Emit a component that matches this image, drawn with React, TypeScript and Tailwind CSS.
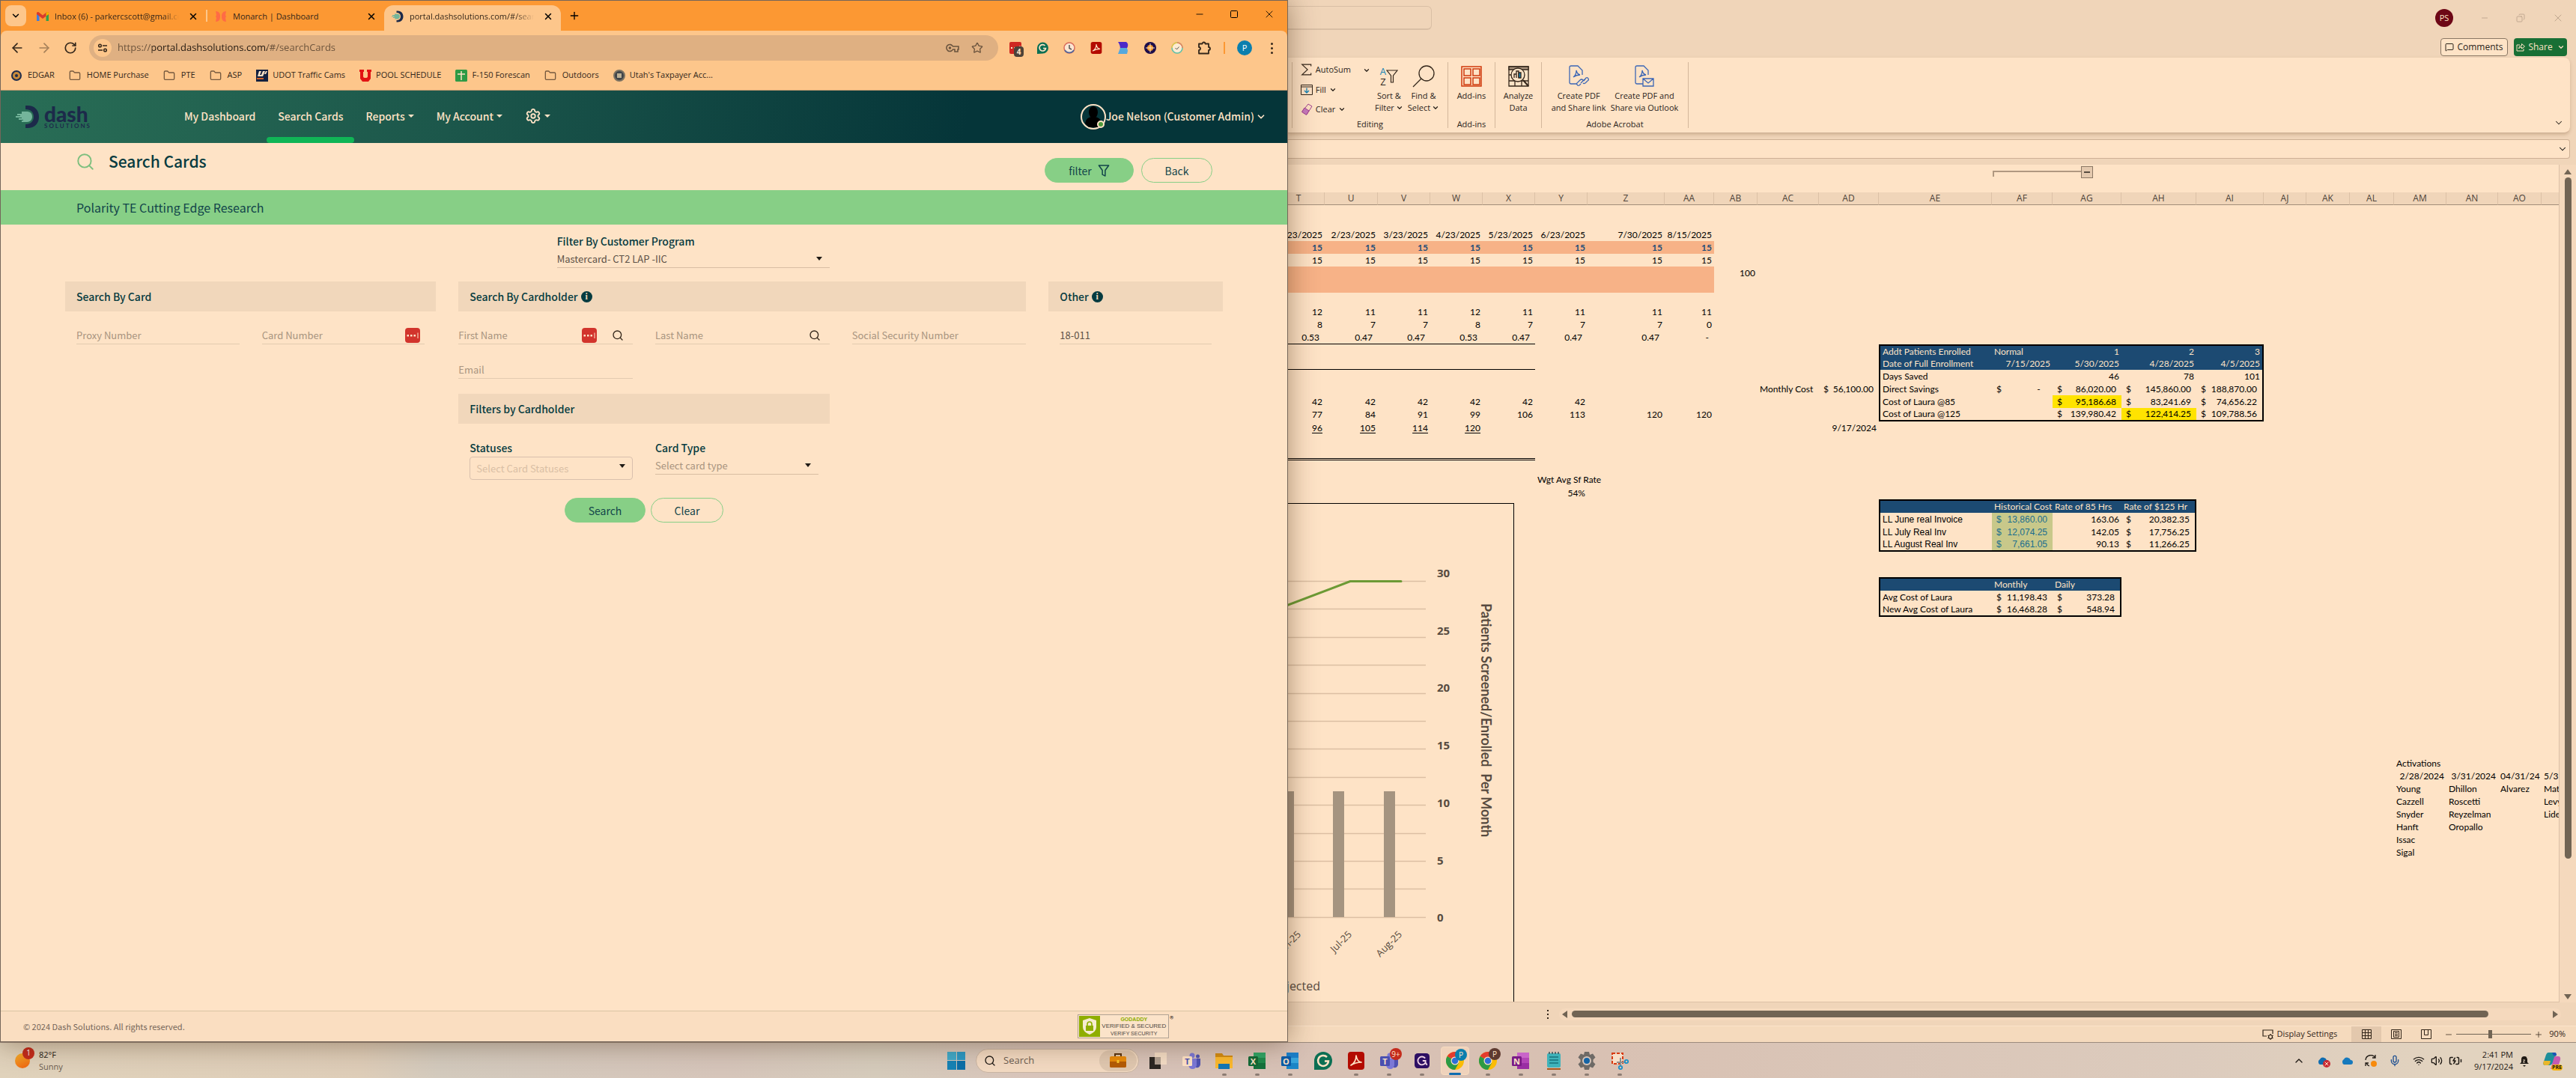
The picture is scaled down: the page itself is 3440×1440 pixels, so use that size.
import React from "react";
import {
  ArrowLeft, ArrowRight, RotateCw, Star, Folder, ChevronDown, ChevronUp, X, Plus, Minus, Square,
  Search, Mic, Wifi, Volume2, BatteryCharging, MessageSquare, Settings, Copy,
} from "lucide-react";

const ui = "font-['Open_Sans','Noto_Sans',sans-serif]";
const dash = "font-['Noto_Sans_CJK_SC','Noto_Sans',sans-serif]";

/* ------------------------------------------------------------------ */
/* Browser                                                             */
/* ------------------------------------------------------------------ */

function GmailIcon() {
  return (
    <svg viewBox="0 0 16 12" className="h-3 w-4 shrink-0">
      <path d="M0 1.5V12h3.5V5L0 1.5z" fill="#3f7de0" />
      <path d="M16 1.5V12h-3.5V5L16 1.5z" fill="#30a14e" />
      <path d="M0 1.5C0 0 2-.5 3 .5l5 4 5-4c1-1 3-.5 3 1V3L8 9 0 3z" fill="#d93a2b" />
      <path d="M12.500 1l1-.7c1-.6 2.500 0 2.500 1.500V3l-3.500 2.500z" fill="#f0b400" />
    </svg>
  );
}

function MonarchIcon() {
  return (
    <svg viewBox="0 0 16 16" className="size-4 shrink-0">
      <path d="M1 1c4 0 6 3 6 6v2c0 3-2 6-6 6l1-5-1-2 1-2zM15 1c-4 0-6 3-6 6v2c0 3 2 6 6 6l-1-5 1-2-1-2z" fill="#ff6b45" />
    </svg>
  );
}

function DashMark({ className }: { className: string }) {
  return (
    <svg viewBox="0 0 32 30" className={className}>
      <path d="M13 0h3c9 0 15 6 15 15s-6 15-15 15h-3v-5c7 0 11-4 11-10S20 5 13 5z" fill="#1c2a4a" />
      <path d="M8 8h8c5 1 6 4 6 7s-2 7-7 7H8v-2h2v-1H4v-2h4v-1H0v-2h6v-1H2v-2h6V9.500z" fill="#74b59b" />
    </svg>
  );
}

const tabText = "flex-1 overflow-hidden whitespace-nowrap text-[11px] text-[#33261a]";

function TabStrip() {
  return (
    <div className="flex h-10 shrink-0 items-end bg-[#fc9833] pl-1.5 pr-4">
      <button aria-label="Search tabs" className="mb-1.5 mr-2 grid h-7 w-7 shrink-0 place-items-center rounded-lg bg-[#fdc68b]">
        <ChevronDown className="size-3.5" strokeWidth={2.5} />
      </button>
      <div className="flex h-[34px] w-[232px] items-center gap-2 px-1.5 pb-1">
        <GmailIcon />
        <span className={tabText + " [mask-image:linear-gradient(90deg,#000_88%,transparent)]"}>Inbox (6) - parkercscott@gmail.com</span>
        <button aria-label="Close tab" className="ml-1 mr-1"><X className="size-3.5" strokeWidth={2.5} /></button>
      </div>
      <div className="mb-3 h-4 w-0.5 bg-[#fdc68b]" />
      <div className="flex h-[34px] w-[236px] items-center gap-2 px-2.5 pb-1">
        <MonarchIcon />
        <span className={tabText}>Monarch | Dashboard</span>
        <button aria-label="Close tab"><X className="size-3.5" strokeWidth={2.5} /></button>
      </div>
      <div className="flex h-[34px] w-[236px] items-center gap-2 rounded-t-xl bg-[#fdc68b] px-2.5 pb-1">
        <DashMark className="h-4 w-4 shrink-0" />
        <span className={tabText + " [mask-image:linear-gradient(90deg,#000_85%,transparent)]"}>portal.dashsolutions.com/#/searchCards</span>
        <button aria-label="Close tab" className="ml-1"><X className="size-3.5" strokeWidth={2.5} /></button>
      </div>
      <button aria-label="New tab" className="mb-3 ml-2.5"><Plus className="size-4" strokeWidth={2} /></button>
      <div className="mb-3.5 ml-auto flex gap-8">
        <button aria-label="Minimize"><Minus className="size-3.5" strokeWidth={1.5} /></button>
        <button aria-label="Maximize"><Square className="size-3.5 p-px" strokeWidth={2} /></button>
        <button aria-label="Close"><X className="size-4" strokeWidth={1.25} /></button>
      </div>
    </div>
  );
}

function ExtensionIcons() {
  return (
    <div className="flex items-center gap-4 pl-[13px] pr-[11px]">
      <div className="relative grid size-5 place-items-center">
        <svg viewBox="0 0 16 16" className="size-4"><rect width="16" height="16" rx="2" fill="#cf2721" /><path d="M2 7h2v2H2zM6 7h2v2H6zM10 7h2v2h-2zM13.500 5h1v6h-1z" fill="#fee3c6" /></svg>
        <div className="absolute left-2 top-2 grid h-[14px] w-[13px] place-items-center rounded bg-[#4d4238] text-[10px] font-bold text-[#fee3c6]">4</div>
      </div>
      <svg viewBox="0 0 16 16" className="mx-0.5 size-4"><path d="M1 16V8a7.500 7.500 0 1 1 7.500 7.500z" fill="#0b6f53" /><path d="M11.500 5A4.200 4.200 0 1 0 12.500 8.500H9" fill="none" stroke="#fee3c6" strokeWidth="1.700" /></svg>
      <svg viewBox="0 0 16 16" className="mx-0.5 size-4"><circle cx="8" cy="8" r="7" fill="#fbe6d2" stroke="#d86a5a" strokeWidth="1.500" /><path d="M2 11a7 7 0 0 0 12 0" fill="none" stroke="#53679a" strokeWidth="1.800" /><path d="M8 4v4.500l3 1.500" fill="none" stroke="#555" strokeWidth="1.500" /></svg>
      <AcrobatIcon className="mx-0.5 size-4" />
      <svg viewBox="0 0 16 16" className="mx-0.5 size-4"><path d="M1 0h11q3 2 2 6t-5 4H4q0-6-3-10z" fill="#4c29c8" /><path d="M4 8h8q2 1 2 4l-1 4H1z" fill="#55a8dd" /></svg>
      <svg viewBox="0 0 16 16" className="mx-0.5 size-4"><circle cx="8" cy="8" r="8" fill="#1d0d4a" /><circle cx="8" cy="8" r="4" fill="#f39a2b" /><path d="M8 2v12M2 8h12" stroke="#fee3c6" /></svg>
      <svg viewBox="0 0 16 16" className="mx-0.5 size-4"><circle cx="8" cy="8" r="7" fill="#fdebd2" stroke="#5cc0a8" strokeWidth="1.500" /><path d="M8 1a7 7 0 0 1 7 7" fill="none" stroke="#ef7f56" strokeWidth="1.500" /><path d="M1 8a7 7 0 0 1 7-7" fill="none" stroke="#f0c341" strokeWidth="1.500" /><path d="M5.500 8l2 2 3-3.500" fill="none" stroke="#555" /></svg>
      <svg viewBox="0 0 20 20" className="size-5"><path d="M3 4.500h4.500a2 2 0 0 1 4 0H16V9a2 2 0 0 1 0 4v4.500H3V13a2 2 0 0 0 0-4z" fill="none" stroke="#33261a" strokeWidth="1.800" strokeLinejoin="round" /></svg>
      <div className="h-4 w-0.5 bg-[#fc9833]" />
      <button aria-label="Profile" className="grid size-5 place-items-center rounded-full bg-[#0b7fae] text-[11px] text-white">P</button>
      <button aria-label="Menu" className="flex w-5 flex-col items-center gap-[3px]">
        <span className="size-[3px] rounded-full bg-[#33261a]" />
        <span className="size-[3px] rounded-full bg-[#33261a]" />
        <span className="size-[3px] rounded-full bg-[#33261a]" />
      </button>
    </div>
  );
}

function Toolbar() {
  return (
    <div className="flex h-[46px] shrink-0 items-center rounded-t-lg bg-[#fdc68b] pl-3">
      <button aria-label="Back" className="mr-4"><ArrowLeft className="size-5 text-[#33261a]" /></button>
      <button aria-label="Forward" className="mr-4"><ArrowRight className="size-5 text-[#a58059]" /></button>
      <button aria-label="Reload" className="mr-4"><RotateCw className="size-[18px] text-[#33261a]" strokeWidth={2.25} /></button>
      <div className="flex h-[34px] flex-1 items-center rounded-full bg-[#dfb082] px-1.5">
        <button aria-label="Site information" className="mr-2 grid size-6 place-items-center rounded-full bg-[#fdc68b]">
          <svg viewBox="0 0 14 14" className="size-3.5 text-[#33261a]" fill="none" stroke="currentColor" strokeWidth="1.500"><circle cx="3.500" cy="4" r="1.800" /><path d="M7 4h6M1 10h6" /><circle cx="10.500" cy="10" r="1.800" /></svg>
        </button>
        <input
          aria-label="Address"
          readOnly
          defaultValue="https://portal.dashsolutions.com/#/searchCards"
          className="flex-1 bg-[linear-gradient(90deg,#69513a_46px,#20170f_46px,#20170f_200px,#69513a_200px)] bg-clip-text text-[13px] text-transparent outline-none"
        />
        <svg viewBox="0 0 18 12" className="mr-4 h-3 w-[18px]" fill="none" stroke="#6b543e" strokeWidth="1.600"><path d="M9.500 4a4.500 4.500 0 1 0 0 4H12v3h4V8h1V4z" /><circle cx="5.500" cy="6" r="1" fill="#6b543e" /></svg>
        <Star className="mr-3.5 size-4 text-[#6b543e]" />
      </div>
      <ExtensionIcons />
    </div>
  );
}

function BookmarkFolder({ label }: { label: string }) {
  return (
    <a href="#" className="flex items-center gap-2"><Folder className="size-4 text-[#75593f]" strokeWidth={2} />{label}</a>
  );
}

function Bookmarks() {
  return (
    <nav className="flex h-[34px] shrink-0 items-center gap-[19px] border-b border-[#c19a70] bg-[#fdc68b] pb-1.5 pl-3.5 text-[11px] text-[#33261a]">
      <a href="#" className="flex items-center gap-2"><span className="grid size-3.5 place-items-center rounded-full border-2 border-[#1e2c4c] bg-[#c98b3a]"><span className="size-1 rounded-full bg-[#1e2c4c]" /></span>EDGAR</a>
      <BookmarkFolder label="HOME Purchase" />
      <BookmarkFolder label="PTE" />
      <BookmarkFolder label="ASP" />
      <a href="#" className="flex items-center gap-1.5"><svg viewBox="0 0 16 16" className="size-4"><path d="M0 0h16v16H0z" fill="#14213f" /><path d="M4 2L2 9h7l3-7h-3L7 7H5l2-5zM13 2l-2 4h2l2-4z" fill="#fee3c6" /><path d="M1 12h9" stroke="#d3622a" strokeWidth="2" /></svg>UDOT Traffic Cams</a>
      <a href="#" className="flex items-center gap-1.5"><svg viewBox="0 0 16 16" className="size-4"><path d="M0 0h6v3H5v6q0 2 3 2t3-2V3h-1V0h6v3h-1v9l-3 4H4l-3-4V3H0z" fill="#e21313" /></svg>POOL SCHEDULE</a>
      <a href="#" className="flex items-center gap-1.5"><svg viewBox="0 0 16 16" className="size-4"><rect width="16" height="16" rx="1.500" fill="#2d9a45" /><path d="M8 2v12M3 6h10" stroke="#fee3c6" strokeWidth="1.500" /></svg>F-150 Forescan</a>
      <BookmarkFolder label="Outdoors" />
      <a href="#" className="flex items-center gap-1.5"><span className="grid size-4 place-items-center rounded-full border-2 border-[#7d7362] bg-[#40454a]"><span className="size-1.5 bg-[#bdb094]" /></span>Utah's Taxpayer Acc...</a>
    </nav>
  );
}

/* ------------------------------------------------------------------ */
/* Card portal                                                         */
/* ------------------------------------------------------------------ */

function Caret() {
  return <span className="inline-block border-x-4 border-t-4 border-x-transparent border-t-current" />;
}

function PortalHeader() {
  return (
    <header className="flex h-[70px] shrink-0 items-stretch bg-[linear-gradient(100deg,#296e56_0%,#1c574b_35%,#053539_75%)] pl-5 pr-7 text-sm font-medium text-[#fee3c6]">
      <a href="#" className="mr-[109px] flex items-center gap-1.5 text-[#1c2a4a]">
        <DashMark className="h-[30px] w-8" />
        <span className="flex flex-col font-['Lato',sans-serif]">
          <span className="text-[28px] font-black leading-6">dash</span>
          <span className="text-[8px] font-bold leading-2 tracking-[2px]">SOLUTIONS</span>
        </span>
      </a>
      <nav className="flex">
        <a href="#" className="flex items-center px-[15px] pb-0.5">My Dashboard</a>
        <a href="#" className="relative flex items-center px-[15px] pb-0.5">Search Cards<span className="absolute inset-x-0 bottom-0 h-2 rounded bg-[#10b556]" /></a>
        <a href="#" className="flex items-center gap-1 px-[15px] pb-0.5">Reports <Caret /></a>
        <a href="#" className="flex items-center gap-1 px-[15px] pb-0.5">My Account <Caret /></a>
        <a href="#" aria-label="Settings" className="flex items-center gap-1 px-[15px] pb-0.5"><Settings className="size-[22px]" /> <Caret /></a>
      </nav>
      <button className="ml-auto flex items-center">
        <span className="relative size-[34px] rounded-full border-2 border-[#fee3c6] bg-[#06363a]">
          <svg viewBox="0 0 30 30" className="size-full"><ellipse cx="15" cy="9" rx="6" ry="8" fill="#000" /><path d="M4 24q1-9 11-9t11 9l-5 5H9z" fill="#000" /></svg>
          <span className="absolute bottom-0 right-0 size-2.5 rounded-full border-2 border-[#fee3c6] bg-[#4c9a3c]" />
        </span>
        <span className="pb-0.5">Joe Nelson (Customer Admin)</span>
        <ChevronDown className="ml-0.5 size-3.5" strokeWidth={3} />
      </button>
    </header>
  );
}

const pill = "flex h-[33px] items-center justify-center gap-2 rounded-full border border-[#87cf86] text-sm text-[#12454a]";

function InfoDot() {
  return <span className="grid size-[15px] place-items-center rounded-full bg-[#063b40] font-['Liberation_Serif',serif] text-xs font-bold leading-none text-[#f1d7bb]">i</span>;
}

function SectionBand({ title, info, className }: { title: string; info?: boolean; className: string }) {
  return (
    <h2 className={"flex h-10 items-center gap-1 bg-[#f1d7bb] px-[15px] text-sm font-medium text-[#063b40] " + className}>
      {title}{info && <InfoDot />}
    </h2>
  );
}

function PasswordBadge({ className }: { className: string }) {
  return (
    <svg viewBox="0 0 20 20" className={"size-5 shrink-0 " + className}>
      <rect width="20" height="20" rx="4" fill="#d2342c" />
      <path d="M2.500 9h2.500v2.500H2.500zM7 9h2.500v2.500H7zM11.500 9H14v2.500h-2.500zM16.500 6.500h1v7.500h-1z" fill="#fee3c6" />
    </svg>
  );
}

function Field({ label, value, children }: { label: string; value?: string; children?: React.ReactNode }) {
  return (
    <div className="flex h-6 items-center border-b border-[#e3cbb0]">
      <input aria-label={label} placeholder={label} defaultValue={value} className="w-0 min-w-0 flex-1 bg-transparent text-[13px] leading-5 text-[#5c5147] outline-none placeholder:text-[#a8947f]" />
      {children}
    </div>
  );
}

function PortalSelect({ label, value, boxed, tone }: { label: string; value: string; boxed?: boolean; tone: string }) {
  return (
    <label className="relative block text-sm font-medium leading-5 text-[#063b40]">
      {label}
      <select
        className={
          "mt-0.5 block w-full appearance-none text-[13px] font-normal leading-5 outline-none " + tone +
          (boxed ? " h-[31px] rounded border border-[#d9c0ad] px-2" : " h-6 border-b border-[#d8bea3]")
        }
      >
        <option>{value}</option>
      </select>
      <span className={"absolute right-2.5 border-x-4 border-t-[5px] border-x-transparent border-t-[#1f1a15] " + (boxed ? "bottom-4" : "bottom-2.5")} />
    </label>
  );
}

function Portal() {
  return (
    <div className={dash + " flex min-h-0 flex-1 flex-col bg-[#fee3c6]"}>
      <PortalHeader />
      <div className="flex h-[63px] shrink-0 items-start pl-[100px] pr-[100px]">
        <Search className="mr-[18px] mt-3 size-[26px] text-[#7dbf7e]" strokeWidth={1.75} />
        <h1 className="mt-1.5 text-[21px] font-medium leading-9 text-[#063b40]">Search Cards</h1>
        <button className={pill + " ml-auto mr-2.5 mt-5 w-[119px] bg-[#87cf86]"}>
          filter
          <svg viewBox="0 0 16 17" className="h-4 w-4" fill="none" stroke="currentColor" strokeWidth="1.600" strokeLinejoin="round"><path d="M1 1h14l-5 7v8l-4-2V8z" /></svg>
        </button>
        <button className={pill + " mt-5 w-[95px]"}>Back</button>
      </div>
      <div className="flex h-[46px] shrink-0 items-center bg-[#87cf86] pl-[101px] text-base text-[#12454a]">Polarity TE Cutting Edge Research</div>

      <form className="mx-[86px] mt-3" onSubmit={(e) => e.preventDefault()}>
        <div className="grid grid-cols-12 gap-x-[30px]">
          <div className="col-span-3 col-start-6">
            <PortalSelect label="Filter By Customer Program" value="Mastercard- CT2 LAP -IIC" tone="text-[#5c5147]" />
          </div>
        </div>
        <div className="mt-[18px] grid grid-cols-12 gap-x-[30px]">
          <section className="col-span-4">
            <SectionBand title="Search By Card" className="" />
            <div className="mt-5 grid grid-cols-2 gap-[30px] px-[15px]">
              <Field label="Proxy Number" />
              <Field label="Card Number"><PasswordBadge className="mr-1.5" /></Field>
            </div>
          </section>
          <section className="col-span-6 grid grid-cols-3 content-start gap-x-[30px]">
            <SectionBand title="Search By Cardholder" info className="col-span-3 mb-5" />
            <Field label="First Name"><PasswordBadge className="mr-5" /><button aria-label="Look up first name" className="mr-3 grid w-4 place-items-center"><Search className="size-4 text-[#33261a]" strokeWidth={2} /></button></Field>
            <Field label="Last Name"><button aria-label="Look up last name" className="mr-3 grid w-4 place-items-center"><Search className="size-4 text-[#33261a]" strokeWidth={2} /></button></Field>
            <Field label="Social Security Number" />
            <div className="mb-5 mt-[22px]"><Field label="Email" /></div>
            <SectionBand title="Filters by Cardholder" className="col-span-2 col-start-1 mb-[22px]" />
            <div className="col-start-1 pl-[15px]"><PortalSelect label="Statuses" value="Select Card Statuses" boxed tone="text-[#d9bfa5]" /></div>
            <div className="pr-[15px]"><PortalSelect label="Card Type" value="Select card type" tone="text-[#a8947f]" /></div>
          </section>
          <section className="col-span-2">
            <SectionBand title="Other" info className="" />
            <div className="mt-5 px-[15px]"><Field label="Other" value="18-011" /></div>
          </section>
        </div>
        <div className="mt-6 flex justify-center gap-[7px]">
          <button className={pill + " w-[108px] bg-[#87cf86]"}>Search</button>
          <button className={pill + " w-[97px]"}>Clear</button>
        </div>
      </form>

      <footer className="mt-auto flex h-[41px] shrink-0 items-center border-t border-[#dac4a3] bg-[#fadec1] pl-[30px] pr-[152px] text-[11px] text-[#75665a]">
        © 2024 Dash Solutions. All rights reserved.
        <a href="#" className="ml-auto flex h-8 w-[122px] border border-[#b0a294] bg-[#fbe3c9] p-px leading-none">
          <span className="grid h-full w-[28px] shrink-0 place-items-center bg-[#8fae00]">
            <svg viewBox="0 0 18 22" className="h-[22px] w-[18px]"><path d="M9 0l9 3v9q0 6-9 10Q0 18 0 12V3z" fill="#f6ecd0" /><path d="M6 10V8a3 3 0 0 1 6 0v2" fill="none" stroke="#8fae00" strokeWidth="1.600" /><path d="M4 10h10v7H4z" fill="#8fae00" /></svg>
          </span>
          <span className="flex flex-1 flex-col items-center justify-between py-px font-['Liberation_Sans',sans-serif]">
            <span className="text-[7px] font-bold text-[#8fae00]">GODADDY</span>
            <span className="text-[8px] text-[#4d463f]">VERIFIED &amp; SECURED</span>
            <span className="text-[7px] text-[#4d463f]">VERIFY SECURITY</span>
          </span>
        </a>
        <span className="mb-5 ml-px text-[10px] leading-none text-[#33261a]">®</span>
      </footer>
    </div>
  );
}

/* ------------------------------------------------------------------ */
/* Spreadsheet                                                         */
/* ------------------------------------------------------------------ */

function Chev() {
  return <ChevronDown className="inline size-2.5" strokeWidth={3} />;
}

function AdobeDoc({ mail }: { mail?: boolean }) {
  return (
    <svg viewBox="0 0 28 30" className="h-[30px] w-7" fill="none" stroke="#3b66b5" strokeWidth="1.300">
      <path d="M12 25H4q-2 0-2-2V3q0-2 2-2h9l6 6v6M7 16q4-3 4-9 1 5 5 6-5 0-9 3" />
      {mail ? <path d="M12 18h14v10H12zl7 6 7-6" /> : <path d="M17 25l-2 2q-2 1-3-1t1-3l3-3q2-2 4 0M21 21l3-4q2-1 3 1t-1 3l-3 3q-2 1-3 0M17 24l5-5" />}
    </svg>
  );
}

function RibbonGroup({ label, className, children }: { label: string; className: string; children: React.ReactNode }) {
  return (
    <div className={"my-1.5 flex shrink-0 flex-col justify-between border-r border-[#d3b79b] " + className}>
      <div className="flex items-start justify-center gap-1.5">{children}</div>
      <div className="h-2.5 text-center leading-[10px]">{label}</div>
    </div>
  );
}

function BigButton({ icon, lines, menu }: { icon: React.ReactNode; lines: string[]; menu?: boolean }) {
  return (
    <button className="flex flex-col items-center leading-4">
      <span className="grid h-[37px] place-items-center">{icon}</span>
      {lines.map((l, i) => <span key={l} className="flex items-center gap-0.5 whitespace-nowrap">{l}{menu && i === lines.length - 1 && <Chev />}</span>)}
    </button>
  );
}

function Ribbon() {
  return (
    <div className="mr-2 flex h-[101px] shrink-0 rounded-r-lg border-b border-[#cdb095] bg-[#fee3c6] text-[11px] text-[#2b231b] shadow-[0_2px_4px_rgba(120,80,40,0.25)]">
      <div className="my-1.5 w-1.5 border-r border-[#d3b79b]" />
      <RibbonGroup label="Editing" className="w-[208px]">
        <div className="flex flex-col gap-2.5 pt-0.5">
          <button className="flex items-center gap-1"><svg viewBox="0 0 14 14" className="size-4" fill="none" stroke="#33261a"><path d="M12 3V1H1.500L8 7l-6.500 6H12v-2" /></svg>AutoSum<span className="ml-3"><Chev /></span></button>
          <button className="flex items-center gap-1"><svg viewBox="0 0 16 14" className="size-4" fill="none" stroke="#33261a"><path d="M.5.5h15v13H.5zM.5 3h15" /><path d="M8 4.500V11M5 8l3 3 3-3" stroke="#1683b5" strokeWidth="1.300" /></svg>Fill<Chev /></button>
          <button className="flex items-center gap-1"><svg viewBox="0 0 16 16" className="size-4" stroke="#a24091"><path d="M10 1l5 3-7 11-6-4z" fill="none" /><path d="M5 6l6 4-3.500 5.500-6-4z" fill="#c77abd" /></svg>Clear<Chev /></button>
        </div>
        <BigButton menu lines={["Sort &", "Filter"]} icon={
          <span className="flex items-center"><span className="flex flex-col text-[13px] leading-[14px]"><span className="text-[#1683b5]">A</span><span>Z</span></span><svg viewBox="0 0 16 18" className="h-[18px] w-4" fill="none" stroke="#33261a" strokeWidth="1.200"><path d="M1 1h14L9.500 8v9h-3V8z" /></svg></span>
        } />
        <BigButton menu lines={["Find &", "Select"]} icon={<svg viewBox="0 0 30 30" className="size-[30px]" fill="none" stroke="#33261a" strokeWidth="1.300"><circle cx="19" cy="11" r="10" /><path d="M12 18L1 29" /></svg>} />
      </RibbonGroup>
      <RibbonGroup label="Add-ins" className="w-[63px]">
        <BigButton lines={["Add-ins"]} icon={<svg viewBox="0 0 28 28" className="size-7" fill="none" stroke="#cf3a0c" strokeWidth="1.500"><path d="M1 1h26v26H1zM4 4h9v9H4zM16 4h9v9h-9zM4 16h9v9H4zM16 16h9v9h-9z" /></svg>} />
      </RibbonGroup>
      <RibbonGroup label="" className="w-[62px]">
        <BigButton lines={["Analyze", "Data"]} icon={<svg viewBox="0 0 28 28" className="size-7" fill="none" stroke="#33261a" strokeWidth="1.300"><path d="M1 1h26v26H1z" /><path d="M1 1h26v4H1z" fill="#a9937d" /><path d="M1 12h4M1 20h26M9 20v7M18 20v7" /><circle cx="13" cy="12" r="9" fill="#fee3c6" /><path d="M20 19l7 8" strokeWidth="2" /><path d="M8 16v-5h3v5M11 16V7h3v9" /><path d="M14 9h3v7h-3z" fill="#1683b5" /></svg>} />
      </RibbonGroup>
      <RibbonGroup label="Adobe Acrobat" className="w-[196px]">
        <BigButton lines={["Create PDF", "and Share link"]} icon={<AdobeDoc />} />
        <BigButton lines={["Create PDF and", "Share via Outlook"]} icon={<AdobeDoc mail />} />
      </RibbonGroup>
      <button aria-label="Collapse ribbon" className="mb-1.5 ml-auto mr-2 self-end"><ChevronDown className="size-3.5" strokeWidth={1.75} /></button>
    </div>
  );
}

const columns: [string, number][] = [
  ["T", 49], ["U", 71], ["V", 70], ["W", 70], ["X", 70], ["Y", 70], ["Z", 103], ["AA", 66], ["AB", 58], ["AC", 82], ["AD", 80],
  ["AE", 151], ["AF", 81], ["AG", 92], ["AH", 100], ["AI", 90], ["AJ", 57], ["AK", 58], ["AL", 59], ["AM", 70], ["AN", 69], ["AO", 58], ["", 24],
];

type Cell = { v?: string; k?: "l" | "r" | "m" | "n" | "c"; c?: string };
type Row = { h: number; cells?: Record<string, Cell> };

const names = columns.map((c) => c[0]);
const series = (cols: string, values: string[], k: Cell["k"] = "r", c = ""): Record<string, Cell> => {
  const out: Record<string, Cell> = {};
  cols.split(" ").forEach((n, i) => { out[n] = { v: values[i], k, c }; });
  return out;
};
const TAA = "T U V W X Y Z AA";
const TX = "T U V W X";
const navy = "bg-[#1c4a72] text-[#fee3c6]";
const salmon = "bg-[#f7b287]";
const L = "border-l-2 border-l-black";
const R = "border-r-2 border-r-black";
const B = "border-b-2 border-b-black";
const Tp = "border-t-2 border-t-black";
const olive = "bg-[#c8c88a] text-[#1a6d8e]";
const yellow = "bg-[#ffe300]";
const blank = (n: number) => Array<string>(n).fill("");

const rows: Row[] = [
  { h: 14 },
  { h: 17 },
  { h: 17, cells: series(TAA, ["1/23/2025", "2/23/2025", "3/23/2025", "4/23/2025", "5/23/2025", "6/23/2025", "7/30/2025", "8/15/2025"]) },
  { h: 17, cells: series(TAA, Array(8).fill("15"), "r", "font-bold text-[#1f4e79] " + salmon) },
  { h: 17, cells: series(TAA, Array(8).fill("15")) },
  { h: 18, cells: { ...series(TAA, blank(8), "r", salmon), AB: { v: "100", k: "r" } } },
  { h: 17, cells: series(TAA, blank(8), "r", salmon) },
  { h: 17 },
  { h: 17, cells: series(TAA, ["12", "11", "11", "12", "11", "11", "11", "11"]) },
  { h: 17, cells: series(TAA, ["8", "7", "7", "8", "7", "7", "7", "0"]) },
  { h: 18, cells: { ...series(TX, ["0.53", "0.47", "0.47", "0.53", "0.47"], "n", "border-b border-b-black"), ...series("Y Z AA", ["0.47", "0.47", "-"], "n") } },
  { h: 17, cells: { AE: { v: "Addt Patients Enrolled", c: `${navy} ${L} ${Tp}` }, AF: { v: "Normal", c: `${navy} ${Tp}` }, ...series("AG AH", ["1", "2"], "r", `${navy} ${Tp}`), AI: { v: "3", k: "r", c: `${navy} ${Tp} ${R}` } } },
  { h: 17, cells: { ...series(TX, blank(5), "r", "border-b border-b-black"), AE: { v: "Date of Full Enrollment", c: `${navy} ${L}` }, ...series("AF AG AH", ["7/15/2025", "5/30/2025", "4/28/2025"], "r", navy), AI: { v: "4/5/2025", k: "r", c: `${navy} ${R}` } } },
  { h: 17, cells: { AE: { v: "Days Saved", c: L }, AG: { v: "46", k: "r" }, AH: { v: "78", k: "r" }, AI: { v: "101", k: "r", c: R } } },
  { h: 17, cells: { AC: { v: "Monthly Cost" }, AD: { v: "56,100.00", k: "m" }, AE: { v: "Direct Savings", c: L }, AF: { v: "-   ", k: "m" }, AG: { v: "86,020.00", k: "m" }, AH: { v: "145,860.00", k: "m" }, AI: { v: "188,870.00", k: "m", c: R } } },
  { h: 17, cells: { ...series("T U V W X Y", Array(6).fill("42")), AE: { v: "Cost of Laura @85", c: L }, AG: { v: "95,186.68", k: "m", c: yellow }, AH: { v: "83,241.69", k: "m" }, AI: { v: "74,656.22", k: "m", c: R } } },
  { h: 18, cells: { ...series(TAA, ["77", "84", "91", "99", "106", "113", "120", "120"]), AE: { v: "Cost of Laura @125", c: `${L} ${B}` }, AF: { c: B }, AG: { v: "139,980.42", k: "m", c: B }, AH: { v: "122,414.25", k: "m", c: `${yellow} ${B}` }, AI: { v: "109,788.56", k: "m", c: `${R} ${B}` } } },
  { h: 17, cells: { ...series("T U V W", ["96", "105", "114", "120"], "r", "underline underline-offset-2"), AD: { v: "9/17/2024", k: "r" } } },
  { h: 17 },
  { h: 18, cells: series(TX, blank(5), "r", "border-b-3 border-double border-b-black") },
  { h: 17 },
  { h: 18, cells: { Y: { v: "Wgt Avg Sf Rate" } } },
  { h: 17, cells: { Y: { v: "54%", k: "r" } } },
  { h: 18, cells: { AE: { c: `${navy} ${L} ${Tp}` }, AF: { v: "Historical Cost", c: `${navy} ${Tp}` }, AG: { v: "Rate of 85 Hrs", c: `${navy} ${Tp}` }, AH: { v: "Rate of $125 Hr", c: `${navy} ${Tp} ${R}` } } },
  { h: 17, cells: { AE: { v: "LL June real Invoice", c: `font-['Liberation_Sans'] ${L}` }, AF: { v: "13,860.00", k: "m", c: `font-['Liberation_Sans'] ${olive}` }, AG: { v: "163.06", k: "r" }, AH: { v: "20,382.35", k: "m", c: R } } },
  { h: 17, cells: { AE: { v: "LL July Real Inv", c: `font-['Liberation_Sans'] ${L}` }, AF: { v: "12,074.25", k: "m", c: `font-['Liberation_Sans'] ${olive}` }, AG: { v: "142.05", k: "r" }, AH: { v: "17,756.25", k: "m", c: R } } },
  { h: 18, cells: { AE: { v: "LL August Real Inv", c: `font-['Liberation_Sans'] ${L} ${B}` }, AF: { v: "7,661.05", k: "m", c: `font-['Liberation_Sans'] ${olive} ${B}` }, AG: { v: "90.13", k: "r", c: B }, AH: { v: "11,266.25", k: "m", c: `${R} ${B}` } } },
  { h: 17 },
  { h: 17 },
  { h: 18, cells: { AE: { c: `${navy} ${L} ${Tp}` }, AF: { v: "Monthly", c: `${navy} ${Tp}` }, AG: { v: "Daily", c: `${navy} ${Tp} ${R}` } } },
  { h: 17, cells: { AE: { v: "Avg Cost of Laura", c: L }, AF: { v: "11,198.43", k: "m" }, AG: { v: "373.28", k: "m", c: R } } },
  { h: 18, cells: { AE: { v: "New Avg Cost of Laura", c: `${L} ${B}` }, AF: { v: "16,468.28", k: "m", c: B }, AG: { v: "548.94", k: "m", c: `${R} ${B}` } } },
  ...Array.from({ length: 11 }, () => ({ h: 17 })),
  { h: 17, cells: { AM: { v: "Activations" } } },
  { h: 17, cells: { AM: { v: "2/28/2024", k: "r" }, AN: { v: "3/31/2024", k: "r" }, AO: { v: "04/31/24" }, "": { v: "5/31/24" } } },
  { h: 17, cells: { AM: { v: "Young" }, AN: { v: "Dhillon" }, AO: { v: "Alvarez" }, "": { v: "Matthews" } } },
  { h: 17, cells: { AM: { v: "Cazzell" }, AN: { v: "Roscetti" }, "": { v: "Levy" } } },
  { h: 17, cells: { AM: { v: "Snyder" }, AN: { v: "Reyzelman" }, "": { v: "Liden" } } },
  { h: 17, cells: { AM: { v: "Hanft" }, AN: { v: "Oropallo" } } },
  { h: 17, cells: { AM: { v: "Issac" } } },
  { h: 17, cells: { AM: { v: "Sigal" } } },
];

const align = {
  l: "justify-start pl-[3px]",
  r: "justify-end pr-[3px]",
  n: "justify-end pr-[7px]",
  m: "justify-between pl-1.5 pr-[7px]",
  c: "justify-center",
};

function CellView({ cell }: { cell?: Cell }) {
  if (!cell) return <td />;
  const clip = cell.v === "Historical Cost";
  return (
    <td className={"p-0 " + (cell.c ?? "")}>
      <div className={"flex items-center whitespace-nowrap leading-none " + align[cell.k ?? "l"] + (clip ? " h-[15px] overflow-hidden" : " h-0")}>
        {cell.k === "m" && <span>$</span>}
        <span className="whitespace-pre">{cell.v}</span>
      </div>
    </td>
  );
}

const gridLines = Array.from({ length: 13 }, (_, i) => 103 + Math.round(i * 37.4));
const axis = [30, 25, 20, 15, 10, 5, 0];

function EnrollmentChart() {
  return (
    <div className="absolute left-0 top-[415px] h-[680px] w-[302px] overflow-hidden border-r border-t border-black bg-[#fee3c6]">
      <svg viewBox="0 0 302 680" className="h-[680px] w-[302px] font-['Open_Sans',sans-serif]" fill="#574b40">
        {gridLines.map((y) => <path key={y} d={`M0 ${y + 0.5}H184`} stroke="#dcbfa3" strokeWidth="1.500" />)}
        <path d="M0 384h8v168H0zM60 384h15v168H60zM128 384h15v168h-15z" fill="#a59480" />
        <path d="M-10 139L83 103.500H151" fill="none" stroke="#6c9a35" strokeWidth="3" strokeLinecap="round" />
        {axis.map((n, i) => <text key={n} x="199" y={98 + Math.round(i * 76.7)} fontSize="15" fontWeight="700">{n}</text>)}
        <text transform="translate(258 133) rotate(90)" fontSize="18" fontWeight="700" className="font-['Lato',sans-serif]" xmlSpace="preserve">{"Patients Screened/Enrolled  Per Month"}</text>
        <text transform="translate(18 576) rotate(-45)" fontSize="13" textAnchor="end">Jun-25</text>
        <text transform="translate(86 576) rotate(-45)" fontSize="13" textAnchor="end">Jul-25</text>
        <text transform="translate(153 576) rotate(-45)" fontSize="13" textAnchor="end">Aug-25</text>
        <text x="43" y="650" fontSize="16" textAnchor="end">Projected</text>
      </svg>
    </div>
  );
}

function Sheet() {
  return (
    <div className="mt-2 flex min-h-0 flex-1">
      <div className="flex min-w-0 flex-1 flex-col overflow-hidden border-b border-r border-[#dcc1a6] bg-[#fee3c6]">
        <div className="flex h-[37px] shrink-0 items-start pl-[941px]">
          <span className="mt-2 h-2 w-[118px] border-l-2 border-t-2 border-[#b09880]" />
          <button aria-label="Collapse outline" className="mt-0.5 grid h-4 w-4 place-items-center border border-[#8a7764] bg-[#e4c9ae]"><span className="h-0.5 w-2 bg-[#574b40]" /></button>
        </div>
        <div className="relative min-h-0 flex-1 overflow-hidden">
          <table className="w-full table-fixed border-separate border-spacing-0 font-['Lato',sans-serif] text-xs text-black">
            <colgroup>
              {columns.map(([n, w]) => <col key={n} style={{ width: w }} />)}
            </colgroup>
            <thead>
              <tr className="h-[17px]">
                {columns.map(([n]) => (
                  <th key={n} scope="col" className={ui + " border-b border-r border-b-[#a28e79] border-r-[#dcc1a6] bg-[#f0d5b9] p-0 font-normal leading-none text-[#4d4238]"}>
                    <div className={"flex h-0 items-center justify-center " + (n === "T" ? "pr-5" : "")}>{n}</div>
                  </th>
                ))}
              </tr>
            </thead>
            <tbody>
              {rows.map((r, i) => (
                <tr key={i} style={{ height: r.h }}>
                  {names.map((n) => <CellView key={n} cell={r.cells?.[n]} />)}
                </tr>
              ))}
            </tbody>
          </table>
          <EnrollmentChart />
        </div>
      </div>
      <div className="flex w-[22px] shrink-0 flex-col items-center bg-[#f5d9bd] pb-1 pt-1.5">
        <span className="border-x-[5px] border-b-[7px] border-x-transparent border-b-[#716454]" />
        <span className="mt-1 w-[9px] basis-[910px] rounded-full bg-[#716454]" />
        <span className="mt-auto border-x-[5px] border-t-[7px] border-x-transparent border-t-[#716454]" />
      </div>
    </div>
  );
}

function StatusBar() {
  return (
    <div className="flex h-[22px] shrink-0 items-center justify-end border-t border-[#fbe3ca] bg-[#f5dabd] pr-3.5 text-[11px] text-[#33261a]">
      <button className="mr-[19px] flex items-center gap-1"><svg viewBox="0 0 16 14" className="h-3.5 w-4" fill="none" stroke="currentColor" strokeWidth="1.200"><path d="M6 9H1V1h13v5" /><circle cx="11" cy="10" r="2.500" /><path d="M11 6v1.500M11 12.500V14M7.500 8l1.500 1M13 11l1.500 1M7.500 12L9 11M13 9l1.500-1" /></svg>Display Settings</button>
      <button aria-label="Normal view" className="grid h-[21px] w-10 place-items-center bg-[#e3c8ad]"><svg viewBox="0 0 13 13" className="size-[13px]" fill="none" stroke="currentColor"><path d="M.5.5h12v12H.5zM4.500.5v12M8.500.5v12M.5 4.500h12M.5 8.500h12" /></svg></button>
      <button aria-label="Page layout view" className="grid w-10 place-items-center"><svg viewBox="0 0 14 13" className="h-[13px] w-3.5" fill="none" stroke="currentColor"><path d="M.5.5h13v12H.5zM3.500 2.500h7v8h-7zM5 4.500h4M5 6.500h4M5 8.500h4" /></svg></button>
      <button aria-label="Page break view" className="grid w-10 place-items-center"><svg viewBox="0 0 14 13" className="h-[13px] w-3.5" fill="none" stroke="currentColor"><path d="M.5.5h13v12H.5zM4.500.5v7h5v-7" /></svg></button>
      <button aria-label="Zoom out" className="ml-1"><Minus className="size-3" strokeWidth={1.5} /></button>
      <label className="relative mx-1 flex h-4 w-[100px] items-center">
        <input type="range" aria-label="Zoom" defaultValue={45} className="h-px w-full appearance-none bg-[#716454] [&::-webkit-slider-thumb]:h-[11px] [&::-webkit-slider-thumb]:w-[5px] [&::-webkit-slider-thumb]:appearance-none [&::-webkit-slider-thumb]:bg-[#716454]" />
      </label>
      <button aria-label="Zoom in"><Plus className="size-3" strokeWidth={1.5} /></button>
      <span className="ml-2">90%</span>
    </div>
  );
}

function Excel() {
  return (
    <div className={ui + " flex min-w-0 flex-1 flex-col bg-[#f0d5b9]"}>
      <div className="flex h-[77px] shrink-0 justify-between">
        <input aria-label="Search workbook" className="mt-2 h-8 w-48 rounded-r-md border border-b-2 border-l-0 border-[#d9bfa5] outline-none" />
        <div className="flex flex-col items-end pr-3 pt-3">
          <div className="flex items-center gap-9 pr-1 text-[#b39c85]">
            <span className="grid size-6 place-items-center rounded-full bg-[#6d0716] text-[11px] text-[#fee3c6]">PS</span>
            <Minus className="size-3" strokeWidth={1.5} />
            <Copy className="size-3 -scale-x-100" strokeWidth={1.5} />
            <X className="size-4" strokeWidth={1.25} />
          </div>
          <div className="mt-[15px] flex gap-2">
            <button className="flex h-6 w-[90px] items-center justify-center gap-1 rounded border border-[#8a7764] bg-[#fee3c6] text-xs text-[#2b231b]"><MessageSquare className="size-3" />Comments</button>
            <button className="flex h-6 w-[71px] items-center justify-center gap-1 rounded bg-[#186f35] text-xs text-[#fee3c6]">
              <svg viewBox="0 0 12 12" className="size-3" fill="none" stroke="currentColor"><path d="M5 3H1v8h9V8M3.500 8q0-4 4-4V1.500L11.500 5 7.500 8V6q-3 0-4 2z" /></svg>
              Share <ChevronDown className="ml-0.5 size-2.5" strokeWidth={3} />
            </button>
          </div>
        </div>
      </div>
      <Ribbon />
      <div className="mr-2 mt-2 flex h-[26px] shrink-0 items-center rounded-r border border-l-0 border-[#cdb095] bg-[#fee3c6]">
        <input aria-label="Formula" className="flex-1 outline-none" />
        <ChevronDown className="mr-0.5 size-3.5" strokeWidth={1.75} />
      </div>
      <Sheet />
      <div className="flex h-[31px] shrink-0 items-center pl-[346px] pr-5">
        <span className="mr-3.5 flex flex-col gap-[3px]"><i className="size-0.5 bg-[#33261a]" /><i className="size-0.5 bg-[#33261a]" /><i className="size-0.5 bg-[#33261a]" /></span>
        <div className="flex h-4 flex-1 items-center rounded-full bg-[#f5d9bd] px-1">
          <span className="border-y-[5px] border-r-[7px] border-y-transparent border-r-[#716454]" />
          <span className="ml-1.5 h-[9px] basis-[1224px] rounded-full bg-[#716454]" />
          <span className="ml-auto border-y-[5px] border-l-[7px] border-y-transparent border-l-[#716454]" />
        </div>
      </div>
      <StatusBar />
    </div>
  );
}

/* ------------------------------------------------------------------ */
/* Taskbar                                                             */
/* ------------------------------------------------------------------ */

function AcrobatIcon({ className }: { className: string }) {
  return (
    <svg viewBox="0 0 24 24" className={className}><rect x="1" width="22" height="24" rx="4" fill="#b30b00" /><path d="M5 18q7-4 7-13 1 8 7 9-8 0-14 4z" fill="none" stroke="#fee3c6" strokeWidth="1.700" strokeLinejoin="round" /></svg>
  );
}

function ChromeIcon() {
  return (
    <svg viewBox="0 0 24 24" className="size-6">
      <circle cx="12" cy="12" r="12" fill="#fbbc05" />
      <path d="M12 12L1.600 6A12 12 0 0 1 22.400 6z" fill="#e33b2e" />
      <path d="M12 12L1.600 6A12 12 0 0 0 12 24l5-9z" fill="#2d9a45" />
      <circle cx="12" cy="12" r="5.500" fill="#fee3c6" />
      <circle cx="12" cy="12" r="4.300" fill="#2f6fd8" />
    </svg>
  );
}

function LetterTile({ letter, dark, bands }: { letter: string; dark: string; bands: string[] }) {
  return (
    <svg viewBox="0 0 24 24" className="size-6">
      <path d="M7 1h16v8H7z" fill={bands[0]} /><path d="M7 8h16v8H7z" fill={bands[1]} /><path d="M7 15h16v8H7z" fill={bands[2]} />
      <rect y="6" width="13" height="13" rx="1.500" fill={dark} />
      <text x="6.500" y="16.500" textAnchor="middle" fontSize="11" fontWeight="700" fill="#fee3c6">{letter}</text>
    </svg>
  );
}

function TeamsIcon({ light }: { light?: boolean }) {
  return (
    <svg viewBox="0 0 24 24" className="size-6">
      <circle cx="13" cy="5" r="3.500" fill="#7b78d6" /><circle cx="20.500" cy="6" r="2.500" fill="#4f52b2" />
      <path d="M16 9h8v8q-1 5-6 4z" fill="#4f52b2" /><path d="M8 9h11v9q-1 5-5.500 5T8 18z" fill="#7b78d6" />
      <rect y="6" width="13" height="13" rx="1.500" fill={light ? "#fee3c6" : "#4a4fb0"} />
      <text x="6.500" y="16.500" textAnchor="middle" fontSize="11" fontWeight="700" fill={light ? "#4a4fb0" : "#fee3c6"}>T</text>
    </svg>
  );
}

function TaskIcon({ label, dot, badge, badgeClass, active, children }: { label: string; dot?: boolean; badge?: string; badgeClass?: string; active?: boolean; children: React.ReactNode }) {
  return (
    <button aria-label={label} className={"relative mx-[3px] grid h-[38px] w-[38px] place-items-center rounded " + (active ? "border border-[#f7dcc0] bg-[#efd2bb]" : "")}>
      {children}
      {badge && <span className={"absolute right-0.5 top-0.5 grid size-4 place-items-center rounded-full text-[10px] leading-none text-[#fee3c6] " + badgeClass}>{badge}</span>}
      {dot && <span className={"absolute -bottom-px h-[3px] rounded-full " + (active ? "w-4 bg-[#0f6cb0]" : "w-1.5 bg-[#8d7d74]")} />}
    </button>
  );
}

function Taskbar() {
  return (
    <footer className={ui + " grid h-12 shrink-0 grid-cols-[1fr_auto_1fr] items-center border-t border-[#9c8b7d] bg-[linear-gradient(90deg,#e0d2bb_0%,#decdb8_14%,#d3cabd_17%,#d6c5ba_28%,#d5cbbb_34%,#d8c4ba_40%,#d8c0b2_60%,#dccbbd_85%,#e2d3bf_95%)] text-xs text-[#1f1a15]"}>
      <div className="flex items-center pl-5">
        <span className="relative mr-3 size-5 rounded-full bg-[linear-gradient(160deg,#f6b12c,#f0620f)]">
          <span className="absolute -right-1.5 -top-2 grid size-4 place-items-center rounded-full bg-[#c42b1c] text-[10px] text-white">1</span>
        </span>
        <span className="flex flex-col text-[11px] leading-4"><span>82°F</span><span className="text-[#6b5d50]">Sunny</span></span>
      </div>
      <div className="flex items-center pl-2.5">
        <button aria-label="Start" className="mr-3.5 grid size-6 grid-cols-2 gap-px">
          <i className="bg-[#3fa9c9]" /><i className="bg-[#2a98c4]" /><i className="bg-[#1683b5]" /><i className="bg-[#0b6fa8]" />
        </button>
        <label className="mr-1 flex h-8 w-[218px] items-center rounded-full border border-[#c9b5a3] bg-[#f3dac2] pl-2.5 pr-0.5">
          <Search className="mr-2.5 size-4" />
          <input aria-label="Search" placeholder="Search" className="w-0 flex-1 text-[13px] outline-none placeholder:text-[#6b5d50]" />
          <span className="grid h-7 w-[50px] place-items-center rounded-full bg-[#e0c8b0]">
            <svg viewBox="0 0 24 20" className="h-5 w-6"><path d="M8 4V1h8v3" fill="none" stroke="#5a3410" strokeWidth="2" /><rect x="1" y="4" width="22" height="15" rx="2" fill="#e88b0b" /><path d="M1 11h22v6q0 2-2 2H3q-2 0-2-2z" fill="#b45c06" /><path d="M10.500 9h3v4h-3z" fill="#fbc62d" /></svg>
          </span>
        </label>
        <TaskIcon label="Task view"><svg viewBox="0 0 24 24" className="size-6"><path d="M0 7h15v16H0z" fill="#2b2723" /><path d="M7 1h16v16H7z" fill="#f4ddc6" /><path d="M7 7h8v10H7z" fill="#b09f90" /></svg></TaskIcon>
        <TaskIcon label="Teams"><TeamsIcon light /></TaskIcon>
        <TaskIcon label="File Explorer" dot><svg viewBox="0 0 24 24" className="size-6"><path d="M0 2h9l2 3h12v5H0z" fill="#d18b13" /><path d="M0 7h23v15H0z" fill="#fbb92f" /><path d="M4 16h15v7H4z" fill="#1477b5" /></svg></TaskIcon>
        <TaskIcon label="Excel" dot><LetterTile letter="X" dark="#126a37" bands={["#2fa566", "#1f8a4c", "#15713c"]} /></TaskIcon>
        <TaskIcon label="Outlook" dot><LetterTile letter="O" dark="#0c5ca8" bands={["#1b7fc9", "#38a6dd", "#1d87c8"]} /></TaskIcon>
        <TaskIcon label="Grammarly"><svg viewBox="0 0 24 24" className="size-6"><path d="M0 24V12A12 12 0 1 1 12 24z" fill="#0b6f53" /><path d="M17 7a7 7 0 1 0 2 5.500h-5" fill="none" stroke="#fee3c6" strokeWidth="2.500" /></svg></TaskIcon>
        <TaskIcon label="Acrobat" dot><AcrobatIcon className="size-6" /></TaskIcon>
        <TaskIcon label="Teams work" dot badge="9+" badgeClass="bg-[#c42b1c]"><TeamsIcon /></TaskIcon>
        <TaskIcon label="G app" dot><svg viewBox="0 0 24 24" className="size-5"><rect width="24" height="24" rx="5" fill="#2d0f63" /><path d="M17 8a6.500 6.500 0 1 0 .5 7v-3H13M17 14l3 5" fill="none" stroke="#f0d5e5" strokeWidth="2.200" /></svg></TaskIcon>
        <TaskIcon label="Chrome" dot active badge="P" badgeClass="bg-[#0b7fae]"><ChromeIcon /></TaskIcon>
        <TaskIcon label="Chrome profile" dot badge="P" badgeClass="bg-[#5e3a30]"><ChromeIcon /></TaskIcon>
        <TaskIcon label="OneNote" dot><LetterTile letter="N" dark="#7a1b87" bands={["#c965c9", "#b345b6", "#9a2ea3"]} /></TaskIcon>
        <TaskIcon label="Notepad" dot><svg viewBox="0 0 24 24" className="size-6"><rect x="3" y="2" width="18" height="19" rx="2" fill="#3fb3ba" /><path d="M6 7h12M6 11h12M6 15h12" stroke="#17737c" strokeWidth="1.500" /><path d="M6 0v3M10 0v3M14 0v3M18 0v3" stroke="#33505a" strokeWidth="1.500" /><path d="M3 22h18v2H3z" fill="#a8561a" /></svg></TaskIcon>
        <TaskIcon label="Settings" dot><svg viewBox="0 0 24 24" className="size-6"><path d="M9 0h6l1 4 4-1.500 3.500 5-3 3v3l3 3-3.500 5L16 20l-1 4H9l-1-4-4 1.500-3.500-5 3-3v-3l-3-3L4 2.500 8 4z" fill="#6e6a66" /><circle cx="12" cy="12" r="6" fill="#d6c5ba" /><circle cx="12" cy="12" r="4" fill="#1464a5" /></svg></TaskIcon>
        <TaskIcon label="Snipping Tool" dot><svg viewBox="0 0 24 24" className="size-6"><path d="M2 2h14v14H2z" fill="#f7dfc8" stroke="#d83b12" strokeWidth="2" strokeDasharray="4 2" /><path d="M13 8v11M8 14h11" stroke="#8d8d8d" strokeWidth="2" /><circle cx="21" cy="13" r="2.200" fill="none" stroke="#1a8fc7" strokeWidth="1.800" /><circle cx="13" cy="21" r="2.200" fill="none" stroke="#1a8fc7" strokeWidth="1.800" /></svg></TaskIcon>
      </div>
      <div className="flex items-center justify-end pr-5">
        <ChevronUp className="mr-4 size-4" />
        <span className="relative mr-4"><svg viewBox="0 0 16 11" className="h-[11px] w-4"><path d="M4 11a4 4 0 0 1 0-7 5 5 0 0 1 9 1 3 3 0 0 1 0 6z" fill="#0f6cb0" /></svg><span className="absolute -bottom-1 -right-0.5 grid size-2.5 place-items-center rounded-full bg-[#c92a34] text-[#fee3c6]"><X className="size-2" strokeWidth={3} /></span></span>
        <svg viewBox="0 0 16 11" className="mr-4 h-[11px] w-4"><path d="M4 11a4 4 0 0 1 0-7 5 5 0 0 1 9 1 3 3 0 0 1 0 6z" fill="#1579bd" /></svg>
        <svg viewBox="0 0 16 16" className="mr-4 size-4" fill="none" stroke="#1f1a15" strokeWidth="1.300"><path d="M1 7a7 7 0 0 1 13-3M14 0v4h-4M6 15a7 7 0 0 1-4-4M1 15v-4h4" /><circle cx="12" cy="12" r="4" fill="#f78a0c" stroke="none" /></svg>
        <Mic className="mr-4 size-4 text-[#1d4f91]" />
        <Wifi className="mr-2 size-4" />
        <Volume2 className="mr-2 size-4" />
        <BatteryCharging className="mr-4 size-[18px]" />
        <span className="mr-2 flex flex-col text-right text-[11px] leading-4"><span>2:41 PM</span><span>9/17/2024</span></span>
        <svg viewBox="0 0 14 16" className="mr-[18px] h-4 w-3.5"><path d="M1 12h12l-2-2V6a4 4 0 0 0-8 0v4zM5 14h4l-2 2z" fill="#1f1a15" /><path d="M5 7h3l-3 3h3M10 1h3l-3 3h3" fill="none" stroke="#d9c9b7" /></svg>
        <span className="relative">
          <svg viewBox="0 0 24 22" className="h-[22px] w-6"><path d="M7 0h8q3 0 2 4l-3 8q-2 5-6 5H3q-4 0-2-5L4 3q1-3 3-3z" fill="#1f8f9a" /><path d="M1 11h9l-1 4q-1 2-3 2H3q-4 0-2-6z" fill="#e9b62b" /><path d="M16 5h4q4 0 3 5l-3 9q-1 3-4 3h-6l4-13q1-4 2-4z" fill="#c65bb0" /><path d="M12 0h4q2 0 2 4H14z" fill="#1b55b5" /></svg>
          <span className="absolute -bottom-0.5 -right-0.5 rounded-sm bg-[#f9b10a] px-px text-[7px] font-bold leading-[8px]">PRE</span>
        </span>
      </div>
    </footer>
  );
}

export default function App() {
  return (
    <div className="flex h-screen flex-col overflow-hidden bg-[#f0d5b9]">
      <div className="flex min-h-0 flex-1">
        <div className={ui + " relative z-10 flex w-1/2 shrink-0 flex-col border border-[#75665a] bg-[#fc9833] shadow-[0_0_36px_rgba(60,30,0,0.45)]"}>
          <TabStrip />
          <Toolbar />
          <Bookmarks />
          <Portal />
        </div>
        <Excel />
      </div>
      <Taskbar />
    </div>
  );
}
